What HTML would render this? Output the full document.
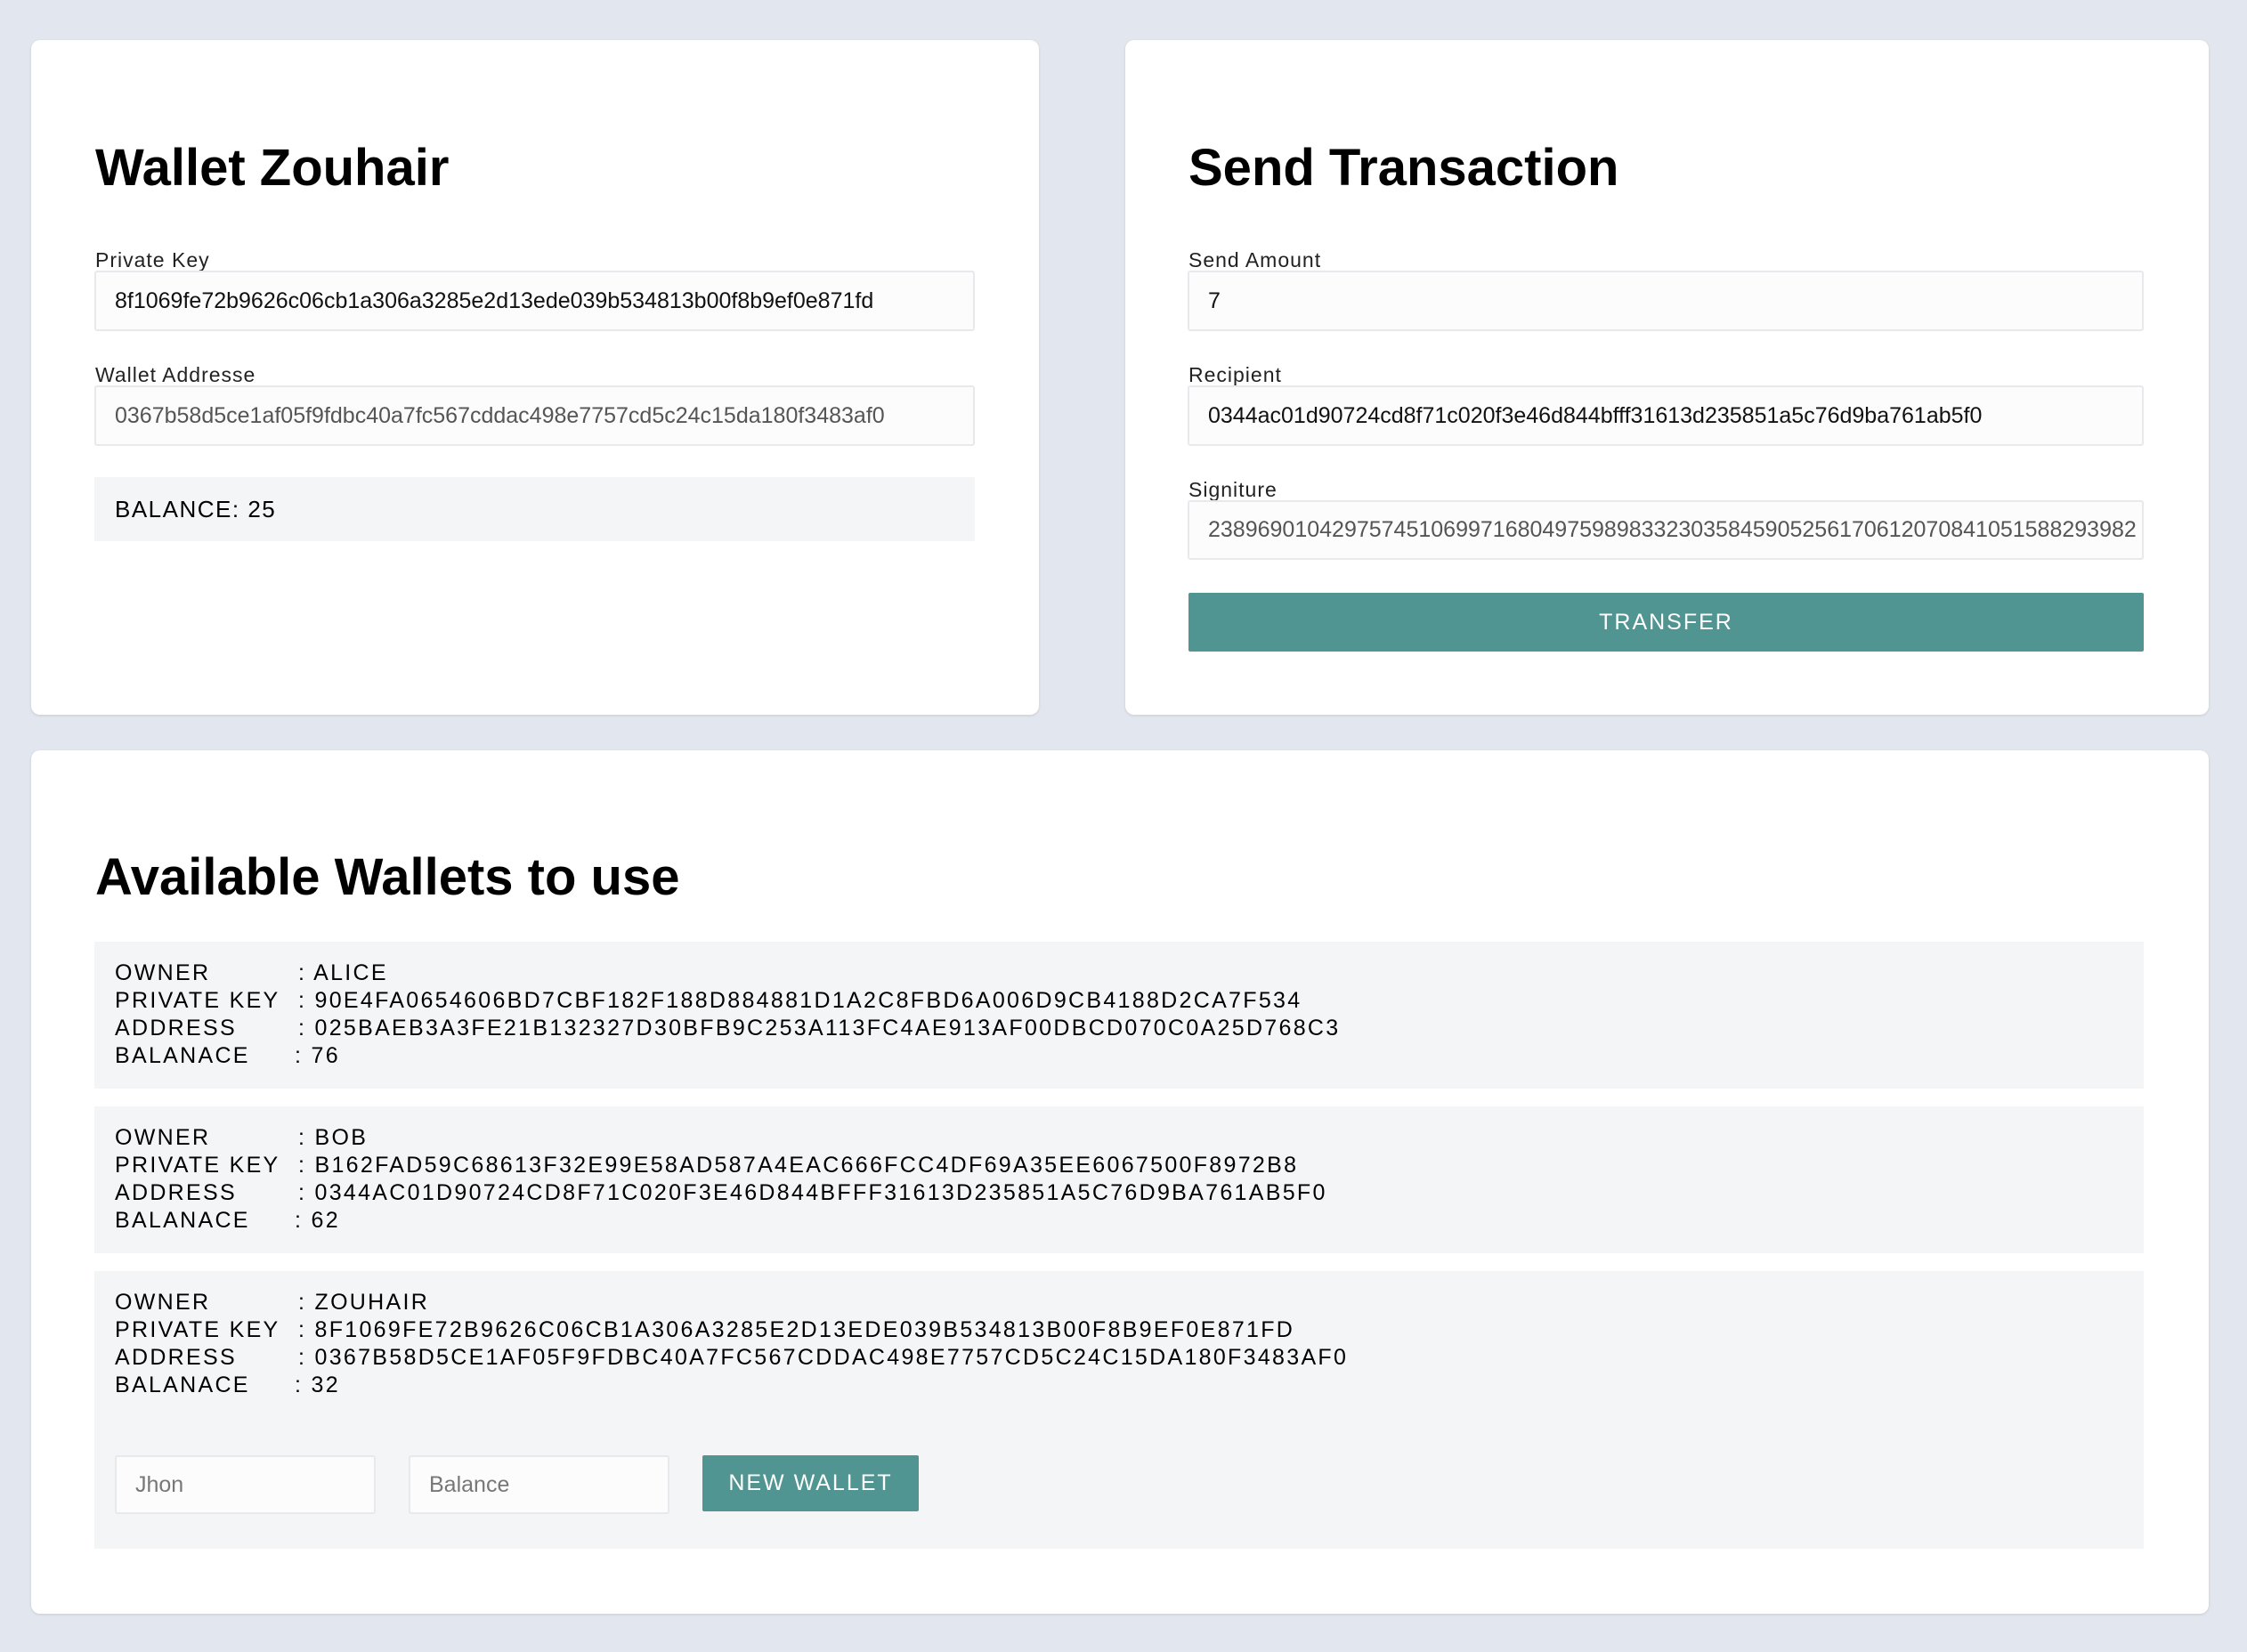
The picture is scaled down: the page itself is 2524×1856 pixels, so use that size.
<!DOCTYPE html>
<html><head><meta charset="utf-8"><style>
*{box-sizing:border-box;margin:0;padding:0}
body{width:2524px;height:1856px;background:#e2e7ef;font-family:"Liberation Sans",Arial,sans-serif;position:relative;overflow:hidden;color:#000}
.card{position:absolute;background:#fff;border-radius:10px;box-shadow:0 1px 3px rgba(0,0,0,.12)}
.abs{position:absolute}
h1{position:absolute;font-size:58px;line-height:58px;font-weight:bold;letter-spacing:0px;white-space:nowrap}
.lbl{position:absolute;font-size:23px;line-height:24px;letter-spacing:1px;color:#222;white-space:nowrap}
.inp{position:absolute;background:#fcfcfc;border:2px solid #e8e9ec;border-radius:3px;font-size:25px;padding-left:21px;display:flex;align-items:center;white-space:nowrap;overflow:hidden;color:#111}
.gray{color:#555}
.btn{position:absolute;background:#509591;color:#fff;display:flex;align-items:center;justify-content:center;font-size:25px;letter-spacing:2px;border-radius:2px}
.box{position:absolute;left:106px;width:2302px;background:#f4f5f7;padding:20px 0 0 23px;font-size:25px;line-height:31px;letter-spacing:2.3px;white-space:nowrap}
.box span{display:inline-block;width:206px}
</style></head><body>
<div class="card" style="left:35px;top:45px;width:1132px;height:758px"></div>
<div class="card" style="left:1264px;top:45px;width:1217px;height:758px"></div>
<div class="card" style="left:35px;top:843px;width:2446px;height:970px"></div>

<h1 style="left:107px;top:160px">Wallet Zouhair</h1>
<div class="lbl" style="left:107px;top:280px">Private Key</div>
<div class="inp" style="left:106px;top:304px;width:989px;height:68px">8f1069fe72b9626c06cb1a306a3285e2d13ede039b534813b00f8b9ef0e871fd</div>
<div class="lbl" style="left:107px;top:409px">Wallet Addresse</div>
<div class="inp gray" style="left:106px;top:433px;width:989px;height:68px">0367b58d5ce1af05f9fdbc40a7fc567cddac498e7757cd5c24c15da180f3483af0</div>
<div class="abs" style="left:106px;top:536px;width:989px;height:72px;background:#f4f5f7;font-size:26px;letter-spacing:1.5px;padding-left:23px;display:flex;align-items:center">BALANCE: 25</div>

<h1 style="left:1335px;top:160px">Send Transaction</h1>
<div class="lbl" style="left:1335px;top:280px">Send Amount</div>
<div class="inp" style="left:1334px;top:304px;width:1074px;height:68px">7</div>
<div class="lbl" style="left:1335px;top:409px">Recipient</div>
<div class="inp" style="left:1334px;top:433px;width:1074px;height:68px">0344ac01d90724cd8f71c020f3e46d844bfff31613d235851a5c76d9ba761ab5f0</div>
<div class="lbl" style="left:1335px;top:538px">Signiture</div>
<div class="inp gray" style="left:1334px;top:562px;width:1074px;height:67px">238969010429757451069971680497598983323035845905256170612070841051588293982</div>
<div class="btn" style="left:1335px;top:666px;width:1073px;height:66px">TRANSFER</div>

<h1 style="left:107px;top:957px">Available Wallets to use</h1>
<div class="box" style="top:1058px;height:165px"><span>OWNER</span>: ALICE<br><span>PRIVATE KEY</span>: 90E4FA0654606BD7CBF182F188D884881D1A2C8FBD6A006D9CB4188D2CA7F534<br><span>ADDRESS</span>: 025BAEB3A3FE21B132327D30BFB9C253A113FC4AE913AF00DBCD070C0A25D768C3<br><span style="width:202px">BALANACE</span>: 76</div>
<div class="box" style="top:1243px;height:165px"><span>OWNER</span>: BOB<br><span>PRIVATE KEY</span>: B162FAD59C68613F32E99E58AD587A4EAC666FCC4DF69A35EE6067500F8972B8<br><span>ADDRESS</span>: 0344AC01D90724CD8F71C020F3E46D844BFFF31613D235851A5C76D9BA761AB5F0<br><span style="width:202px">BALANACE</span>: 62</div>
<div class="box" style="top:1428px;height:312px"><span>OWNER</span>: ZOUHAIR<br><span>PRIVATE KEY</span>: 8F1069FE72B9626C06CB1A306A3285E2D13EDE039B534813B00F8B9EF0E871FD<br><span>ADDRESS</span>: 0367B58D5CE1AF05F9FDBC40A7FC567CDDAC498E7757CD5C24C15DA180F3483AF0<br><span style="width:202px">BALANACE</span>: 32</div>
<div class="inp" style="left:129px;top:1635px;width:293px;height:66px;color:#777">Jhon</div>
<div class="inp" style="left:459px;top:1635px;width:293px;height:66px;color:#777">Balance</div>
<div class="btn" style="left:789px;top:1635px;width:243px;height:63px">NEW WALLET</div>
</body></html>
